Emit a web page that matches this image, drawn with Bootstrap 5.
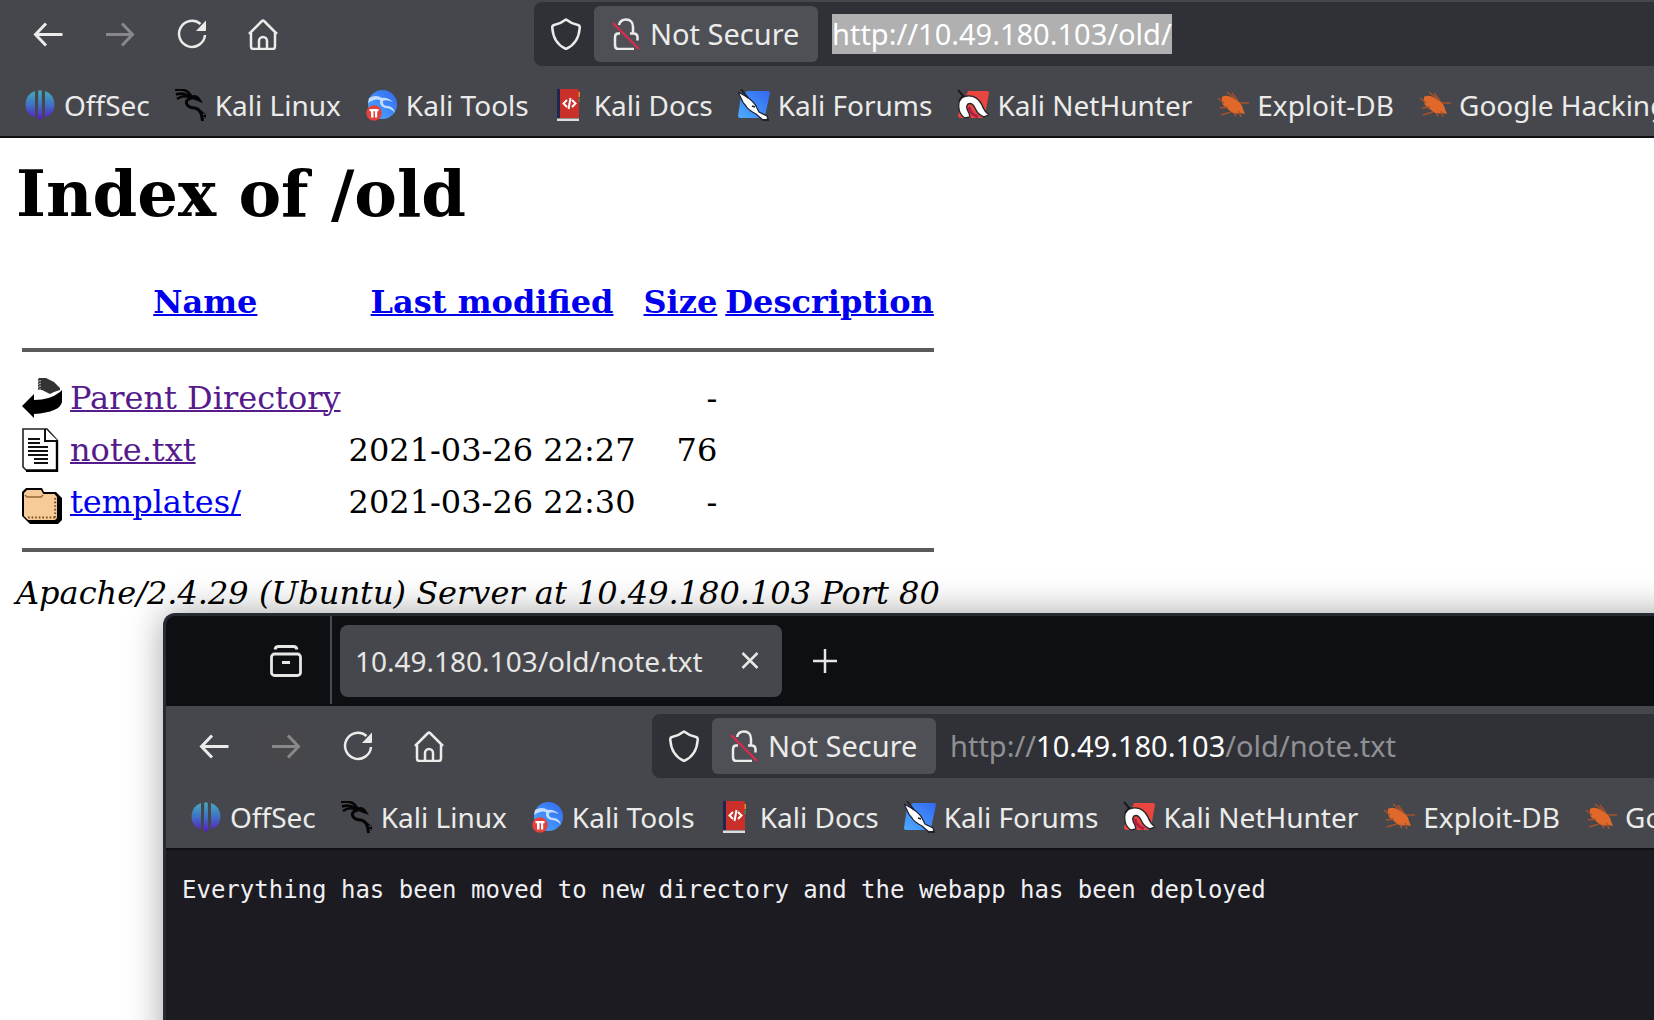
<!DOCTYPE html>
<html lang="en">
<head>
<meta charset="utf-8">
<meta name="viewport" content="width=device-width, initial-scale=1">
<title>Index of /old</title>
<link href="https://cdn.jsdelivr.net/npm/bootstrap@5.3.0/dist/css/bootstrap.min.css" rel="stylesheet">
<style>
  body { font-family: "Noto Sans", sans-serif; font-size: 28px; line-height: 40px; background: #fff; color: #000; }
  .desktop { min-height: 100vh; }
  .chrome { background: #46474c; color: #ebebea; border-bottom: 2px solid #0f1013; }
  .ico { width: 32px; height: 32px; flex: none; display: block; }
  .tool-strip { padding-left: 12px; padding-top: 2px; }
  .note-window .tool-strip { padding-top: 8px; }
  .tool-btn { width: 72px; height: 64px; color: inherit; background: none; border: 0; padding: 0 20px; flex: none; }
  .tool-btn:disabled { opacity: .4; }
  .url-field { height: 64px; background: #303136; border-radius: 8px 0 0 8px; margin-left: 234px; padding-left: 16px; min-width: 0; font-size: 29px; }
  .note-window .url-field { margin-left: 186px; }
  .secure-btn { height: 56px; width: 224px; margin-left: 12px; margin-right: 14px; padding: 0 0 0 16px; gap: 8px; background: #4f5055; color: inherit; border: 0; border-radius: 6px; flex: none; }
  .url-text { background: none; border: 0; padding: 0; height: 40px; color: #fff; outline: 0; min-width: 0; }
  .url-picked { background: linear-gradient(#b0b0b0, #b0b0b0) 0 0 / 340px 40px no-repeat; }
  .url-dim { color: #8f9093; }
  .bookmarks { padding: 19px 24px 11px; gap: 25px; height: 70px; overflow: hidden; white-space: nowrap; }
  .bookmarks a { color: inherit; gap: 8px; flex: none; }

  .listing { font-family: "DejaVu Serif", serif; font-size: 32px; line-height: 39px; padding: 18px 16px 0; }
  .listing h1 { font-size: 64px; line-height: 75px; font-weight: 700; margin: 0 0 43px; }
  .listing table { border-collapse: separate; border-spacing: 4px; }
  .listing th, .listing td { padding: 2px; white-space: nowrap; }
  .listing thead th { text-align: center; height: 48px; }
  .listing td.num { text-align: right; }
  .listing hr { margin: 16px 0; border: 0; height: 4px; background: #5a5a5a; opacity: 1; }
  .listing a { color: #0000ee; text-decoration-thickness: 2px; }
  .listing a.seen { color: #551a8b; }
  .file-ico { width: 40px; height: 44px; display: block; }
  .listing address { margin: 0; font-style: italic; line-height: 39px; white-space: nowrap; }

  .note-window { left: 163px; right: -48px; top: 613px; bottom: -48px; background: #1c1b22; border: solid #262b33; border-width: 3px 0 0 3px; border-radius: 12px 0 0 0; box-shadow: 0 0 36px rgba(0,0,0,.36); overflow: hidden; }
  .tab-strip { background: #0e0f13; height: 90px; color: #e6e6e5; padding-left: 88px; }
  .tab-rule { width: 2px; height: 88px; background: #4a4b50; margin-right: 8px; }
  .plain-btn { background: none; border: 0; color: inherit; padding: 0; }
  .view-btn { width: 76px; padding-left: 16px; }
  .page-tab { width: 442px; height: 72px; background: #46474c; border-radius: 8px; padding: 0 16px 0 15px; }
  .plus-btn { margin-left: 27px; }
  .note-text { font-family: "DejaVu Sans Mono", monospace; font-size: 24px; line-height: 28px; color: #f0f0f3; margin: 0; padding: 26px 16px; white-space: pre-wrap; }
</style>
<script src="https://cdn.jsdelivr.net/npm/bootstrap@5.3.0/dist/js/bootstrap.bundle.min.js"></script>
</head>
<body>
<svg width="0" height="0" class="position-absolute" aria-hidden="true">
  <defs>
    <linearGradient id="gOff" x1="0" y1="0" x2="0" y2="32" gradientUnits="userSpaceOnUse"><stop offset="0" stop-color="#45b3bd"/><stop offset=".5" stop-color="#4070c4"/><stop offset="1" stop-color="#5a14c8"/></linearGradient>
    <linearGradient id="gBlue" x1="0" y1="1" x2="1" y2="0"><stop offset="0" stop-color="#4cabff"/><stop offset="1" stop-color="#3368f0"/></linearGradient>
  </defs>
  <symbol id="back" viewBox="0 0 32 32"><path d="M30.500 16.500H4M14 5.500L3.500 16.500l10.500 11" fill="none" stroke="currentColor" stroke-width="3"/></symbol>
  <symbol id="forward" viewBox="0 0 32 32"><path d="M2 16.500h26M18 5.500l10.500 11l-10.500 11" fill="none" stroke="currentColor" stroke-width="3"/></symbol>
  <symbol id="reload" viewBox="0 0 32 32"><path d="M29 17A13 13 0 1 1 24.500 6" fill="none" stroke="currentColor" stroke-width="2.500"/><path d="M30 2.500V12a1 1 0 0 1-1 1H20z" fill="currentColor"/></symbol>
  <symbol id="home" viewBox="0 0 32 32"><path d="M1 16L14 3q1-1 2 0L29 16M3 15V28.500q0 2.500 2.500 2.500H24.500Q27 31 27 28.500V15M11 30.500V23a4 4 0 0 1 8 0V30.500" fill="none" stroke="currentColor" stroke-width="2.500"/></symbol>
  <symbol id="shield" viewBox="0 0 32 32"><path d="M16 1.500Q21 5.500 28 7Q30 7.500 29.700 10C29 20 25 27 16 31C7 27 3 20 2.300 10Q2 7.500 4 7Q11 5.500 16 1.500z" fill="none" stroke="currentColor" stroke-width="2.500" stroke-linejoin="round"/></symbol>
  <symbol id="lock" viewBox="0 0 32 32"><path d="M9 7C10 3 13 1.500 16 1.500c4.500 0 7 3 7 7.500v6M20 15.500h3.500q4 0 4 4v3M10 15.500H8q-3 0-3 4V27q0 4 3 4H24" fill="none" stroke="currentColor" stroke-width="2.500"/><path d="M3 5L29 31" stroke="#e22850" stroke-width="2.200"/></symbol>
  <symbol id="offsec" viewBox="0 0 32 32"><path d="M11 2V28.500Q1.500 25 1.500 15.500Q2 5 11 2zM21 2V28.500Q30.500 25 30.500 15.500Q30 5 21 2z" fill="url(#gOff)"/><path d="M16 1l1.700 1 .6 26L16 32l-2.300-4L14.300 2z" fill="url(#gOff)"/></symbol>
  <symbol id="dragon" viewBox="0 0 32 32"><path d="M0 1Q8 -.5 13 3l4 5M1 5.500Q7 3.500 12 6l4 2M2 10q5-3.500 10-2.500l4 1" fill="none" stroke="#050505" stroke-width="2.600"/><path d="M17 8.500Q9.500 11 12 15.500Q14 19 20 19Q27 20.500 27.500 32" fill="none" stroke="#050505" stroke-width="3"/><path d="M14 8Q20 4 24 8l4 6l-7-2.500Q17 9.500 15 11zM23 19l9 7-7-3zM26 26l5 0 0 3z" fill="#050505"/></symbol>
  <symbol id="tools" viewBox="0 0 32 32"><circle cx="16.500" cy="15.500" r="14.500" fill="url(#gBlue)"/><path d="M3 9Q10 5 16 9Q21 8 27 13Q20 10 17 12Q16 17 22 17Q28 18 29 24Q25 19 19 19Q13 17 14 11Q9 9 2 14z" fill="#c3dcff"/><circle cx="8" cy="24" r="7.800" fill="#e2413c"/><path d="M3.500 20h9v2.200h-1.300v6.300H9V22.200H7.500v6.300H5V22.200H3.500z" fill="#fff"/></symbol>
  <symbol id="docs" viewBox="0 0 32 32"><path d="M3 0h5v29H3z" fill="#20264f"/><path d="M6 0h17q2 0 2 2v27H6z" fill="#c9302a"/><path d="M24.500 3h1.500v5h-1.500z" fill="#e48d27"/><path d="M24.500 9h1.500v4h-1.500z" fill="#43845b"/><path d="M3 29.500h22V32H3z" fill="#ddd"/><path d="M13 11l-3.500 3.500 3.500 3.500M18 11l3.500 3.500-3.500 3.500M16.500 9l-2 11" fill="none" stroke="#fff" stroke-width="2"/></symbol>
  <symbol id="forums" viewBox="0 0 32 32"><path d="M9 2H30q2 0 2 2L27 27q-1 2-3 2H2q-2 0-2-2L3 7z" fill="url(#gBlue)"/><path d="M0 3Q6 6 9 8Q16 13 18 17L21 23L29 27L30 30L25 31L18 25Q10 21 8 17Q4 13 3 9z" fill="#fff" stroke="#1c2130" stroke-width="1.200"/><path d="M3 0l7 9M14 17l3 1M24 31l7 0" stroke="#222" stroke-width="1.800"/></symbol>
  <symbol id="nethunter" viewBox="0 0 32 32"><path d="M11 2H30q2 0 2 2l-4 22q0 2-3 3H4q-3 0-3-3z" fill="#e8463f"/><path d="M2 20Q0 8 10 7Q20 6 25 16Q27 22 32 26L27 28Q21 26 18 19Q15 13 11 15Q8 18 12 24L13 28L8 29Q3 26 2 20z" fill="#fff" stroke="#28282c" stroke-width="1.400"/><path d="M1 1l6 7M2 12l4-5" stroke="#1b1b1e" stroke-width="2"/><path d="M12 18Q13 25 21 28" fill="none" stroke="#b21f46" stroke-width="3"/></symbol>
  <symbol id="bug" viewBox="0 0 32 32"><path d="M5 8Q9 5 16 9l5 3q4 3 5 8l2 5-5-1q-6 2-11-3L6 16q-2-4-1-8z" fill="#e0682b"/><path d="M1 9l6 5M3 19l8-1M4 26q6-2 10-3M10 3l8 7M15 4l6 8M23 14l9 0M17 24l2 3M22 22l2 6" fill="none" stroke="#a85229" stroke-width="1.400"/></symbol>
  <symbol id="f-back" viewBox="0 0 20 22"><path d="M8 1h4l4 2 3 3v1l-3 1-2 1-2-1-2-1H8z" fill="#333"/><path d="M8 1v7M9 2v5" stroke="#fff" stroke-width=".5" stroke-dasharray=".7 .7"/><path d="M0 15l6-6v3q8 0 13-4l1-1v6q-1 5-14 6v2z" fill="#000"/></symbol>
  <symbol id="f-text" viewBox="0 0 20 22"><path d="M1 .5H12.500l5 5.500V21H2L.5 19.500V.5z" fill="#fff" stroke="#222" stroke-width=".8"/><path d="M17.500 6V21.500H2" fill="none" stroke="#000" stroke-width="1.200"/><path d="M11.500.5V6.500H18" fill="#fff" stroke="#111"/><path d="M3 5.500h6M3 7.500h6M3 9.500h10M3 11.500h10M3 13.500h10M6 15.500h7M6 17.500h7" stroke="#111" stroke-width="1"/></symbol>
  <symbol id="f-dir" viewBox="0 0 20 22"><path d="M2 4h8l1 2h6l3 3v11l-2 2H4l-3-3-1-1V6z" fill="#000"/><path d="M2.500 5h7l1.200 2h5.500l1.300 1.500V19l-1 1H3l-2-2V6.500z" fill="#f7cb98"/><path d="M1.500 7.500l1 1H9.500l1-1" fill="none" stroke="#996633" stroke-width=".7"/><path d="M16.600 9v10M3 18.800h14" fill="none" stroke="#7a4a20" stroke-width="1" stroke-dasharray=".8 1"/></symbol>
  <symbol id="view" viewBox="0 0 32 32"><path d="M5 4.500Q5.500 1.500 8.500 1.500H23.500Q26.500 1.500 27 4.500" fill="none" stroke="currentColor" stroke-width="2.800"/><rect x="1.500" y="9" width="29" height="21.500" rx="3" fill="none" stroke="currentColor" stroke-width="2.800"/><path d="M12 17.500h8" stroke="currentColor" stroke-width="3"/></symbol>
  <symbol id="cross" viewBox="0 0 32 32"><path d="M8.500 8l15 15M23.500 8l-15 15" stroke="currentColor" stroke-width="2.500"/></symbol>
  <symbol id="plus" viewBox="0 0 32 32"><path d="M4 16h24M16 4v24" stroke="currentColor" stroke-width="2.500"/></symbol>
</svg>

<div class="desktop position-relative overflow-hidden">
  <header class="chrome">
    <div class="tool-strip d-flex">
      <button class="tool-btn" type="button" aria-label="Back"><svg class="ico"><use href="#back"/></svg></button>
      <button class="tool-btn" type="button" aria-label="Forward" disabled><svg class="ico"><use href="#forward"/></svg></button>
      <button class="tool-btn" type="button" aria-label="Reload"><svg class="ico"><use href="#reload"/></svg></button>
      <button class="tool-btn" type="button" aria-label="Home"><svg class="ico"><use href="#home"/></svg></button>
      <div class="url-field d-flex align-items-center flex-grow-1">
        <svg class="ico"><use href="#shield"/></svg>
        <button class="secure-btn d-flex align-items-center" type="button"><svg class="ico"><use href="#lock"/></svg>Not Secure</button>
        <input class="url-text url-picked flex-grow-1" type="text" aria-label="Address" value="http://10.49.180.103/old/">
      </div>
    </div>
    <nav class="bookmarks d-flex" aria-label="Bookmarks">
      <a class="d-flex align-items-center text-decoration-none" href="#"><svg class="ico"><use href="#offsec"/></svg>OffSec</a>
      <a class="d-flex align-items-center text-decoration-none" href="#"><svg class="ico"><use href="#dragon"/></svg>Kali Linux</a>
      <a class="d-flex align-items-center text-decoration-none" href="#"><svg class="ico"><use href="#tools"/></svg>Kali Tools</a>
      <a class="d-flex align-items-center text-decoration-none" href="#"><svg class="ico"><use href="#docs"/></svg>Kali Docs</a>
      <a class="d-flex align-items-center text-decoration-none" href="#"><svg class="ico"><use href="#forums"/></svg>Kali Forums</a>
      <a class="d-flex align-items-center text-decoration-none" href="#"><svg class="ico"><use href="#nethunter"/></svg>Kali NetHunter</a>
      <a class="d-flex align-items-center text-decoration-none" href="#"><svg class="ico"><use href="#bug"/></svg>Exploit-DB</a>
      <a class="d-flex align-items-center text-decoration-none" href="#"><svg class="ico"><use href="#bug"/></svg>Google Hacking</a>
    </nav>
  </header>

  <main class="listing">
    <h1>Index of /old</h1>
    <table>
      <thead>
        <tr><th></th><th><a href="#">Name</a></th><th><a href="#">Last modified</a></th><th><a href="#">Size</a></th><th><a href="#">Description</a></th></tr>
      </thead>
      <tbody>
        <tr><td colspan="5"><hr></td></tr>
        <tr><td><svg class="file-ico"><use href="#f-back"/></svg></td><td><a class="seen" href="#">Parent Directory</a></td><td></td><td class="num">-</td><td></td></tr>
        <tr><td><svg class="file-ico"><use href="#f-text"/></svg></td><td><a class="seen" href="#">note.txt</a></td><td class="num">2021-03-26 22:27</td><td class="num">76</td><td></td></tr>
        <tr><td><svg class="file-ico"><use href="#f-dir"/></svg></td><td><a href="#">templates/</a></td><td class="num">2021-03-26 22:30</td><td class="num">-</td><td></td></tr>
        <tr><td colspan="5"><hr></td></tr>
      </tbody>
    </table>
    <address>Apache/2.4.29 (Ubuntu) Server at 10.49.180.103 Port 80</address>
  </main>

  <section class="note-window position-absolute" aria-label="note.txt">
    <div class="tab-strip d-flex">
      <button class="plain-btn view-btn" type="button" aria-label="Recent tabs"><svg class="ico"><use href="#view"/></svg></button>
      <div class="tab-rule"></div>
      <div class="page-tab d-flex align-items-center justify-content-between align-self-center">
        <span>10.49.180.103/old/note.txt</span>
        <button class="plain-btn" type="button" aria-label="Close tab"><svg class="ico"><use href="#cross"/></svg></button>
      </div>
      <button class="plain-btn plus-btn" type="button" aria-label="New tab"><svg class="ico"><use href="#plus"/></svg></button>
    </div>
    <div class="chrome">
      <div class="tool-strip d-flex">
        <button class="tool-btn" type="button" aria-label="Back"><svg class="ico"><use href="#back"/></svg></button>
        <button class="tool-btn" type="button" aria-label="Forward" disabled><svg class="ico"><use href="#forward"/></svg></button>
        <button class="tool-btn" type="button" aria-label="Reload"><svg class="ico"><use href="#reload"/></svg></button>
        <button class="tool-btn" type="button" aria-label="Home"><svg class="ico"><use href="#home"/></svg></button>
        <div class="url-field d-flex align-items-center flex-grow-1">
          <svg class="ico"><use href="#shield"/></svg>
          <button class="secure-btn d-flex align-items-center" type="button"><svg class="ico"><use href="#lock"/></svg>Not Secure</button>
          <div class="url-text flex-grow-1" role="textbox" contenteditable="true" spellcheck="false" aria-label="Address"><span class="url-dim">http://</span>10.49.180.103<span class="url-dim">/old/note.txt</span></div>
        </div>
      </div>
      <nav class="bookmarks d-flex" aria-label="Bookmarks">
        <a class="d-flex align-items-center text-decoration-none" href="#"><svg class="ico"><use href="#offsec"/></svg>OffSec</a>
        <a class="d-flex align-items-center text-decoration-none" href="#"><svg class="ico"><use href="#dragon"/></svg>Kali Linux</a>
        <a class="d-flex align-items-center text-decoration-none" href="#"><svg class="ico"><use href="#tools"/></svg>Kali Tools</a>
        <a class="d-flex align-items-center text-decoration-none" href="#"><svg class="ico"><use href="#docs"/></svg>Kali Docs</a>
        <a class="d-flex align-items-center text-decoration-none" href="#"><svg class="ico"><use href="#forums"/></svg>Kali Forums</a>
        <a class="d-flex align-items-center text-decoration-none" href="#"><svg class="ico"><use href="#nethunter"/></svg>Kali NetHunter</a>
        <a class="d-flex align-items-center text-decoration-none" href="#"><svg class="ico"><use href="#bug"/></svg>Exploit-DB</a>
        <a class="d-flex align-items-center text-decoration-none" href="#"><svg class="ico"><use href="#bug"/></svg>Google Hacking</a>
      </nav>
    </div>
    <pre class="note-text">Everything has been moved to new directory and the webapp has been deployed</pre>
  </section>
</div>
</body>
</html>
